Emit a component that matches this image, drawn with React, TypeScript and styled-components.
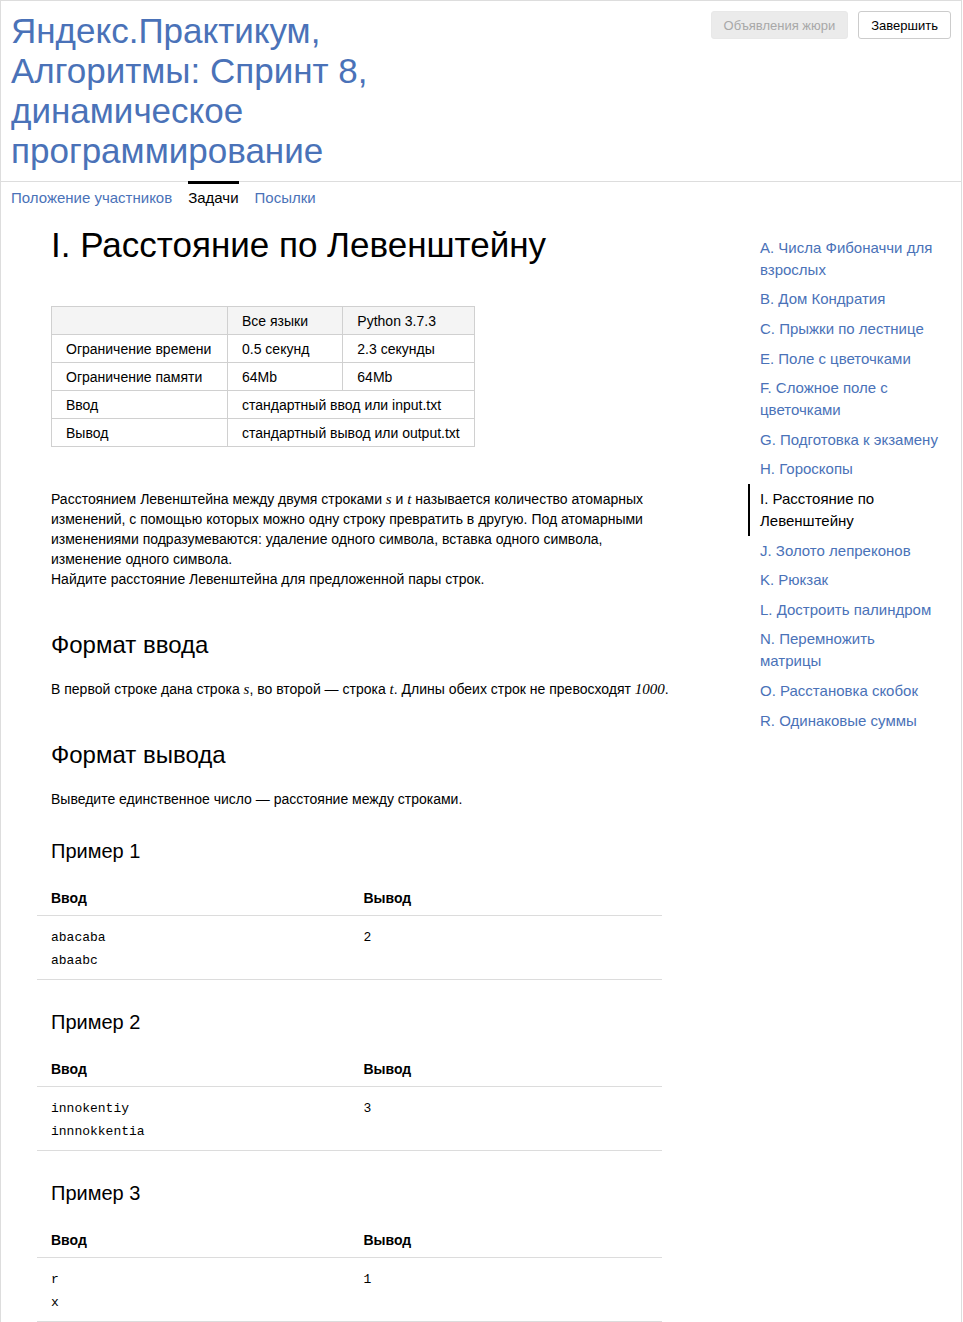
import styled, { createGlobalStyle } from 'styled-components';

const GlobalStyle = createGlobalStyle`
	body {
		margin: 0;
		background: #fff;
		font-family: "Liberation Sans", Arial, sans-serif;
		color: #000;
	}
`;

const Page = styled.div`
	width: 962px;
	min-height: 1322px;
	box-sizing: border-box;
	border: 1px solid #dddddd;
	border-bottom: none;
`;

const Header = styled.header`
	display: flex;
	justify-content: space-between;
	align-items: flex-start;
	padding: 10px;
	border-bottom: 1px solid #dddddd;
`;

const Title = styled.h1`
	margin: 0;
	max-width: 420px;
	font-size: 35px;
	line-height: 40px;
	font-weight: normal;
	color: #4a72b8;
`;

const Actions = styled.div`
	display: flex;
	gap: 10px;
`;

const Button = styled.button<{ $disabled?: boolean }>`
	height: 28px;
	padding: 0 12px;
	box-sizing: border-box;
	border-radius: 3px;
	font-family: "Liberation Sans", Arial, sans-serif;
	font-size: 13px;
	border: 1px solid ${(p) => (p.$disabled ? '#e8e8e8' : '#cccccc')};
	background: ${(p) => (p.$disabled ? '#ebebeb' : '#ffffff')};
	color: ${(p) => (p.$disabled ? '#a8a8a8' : '#000000')};
`;

const Tabs = styled.nav`
	display: flex;
	gap: 16px;
	padding: 0 10px;
	height: 36px;
`;

const Tab = styled.a<{ $active?: boolean }>`
	display: block;
	padding-top: 4px;
	margin-top: -1px;
	border-top: 3px solid ${(p) => (p.$active ? '#000' : 'transparent')};
	font-size: 15px;
	line-height: 20px;
	color: ${(p) => (p.$active ? '#000' : '#4a72b8')};
	text-decoration: none;
`;

const Main = styled.div`
	display: grid;
	grid-template-columns: 1fr 213px;
`;

const Content = styled.main`
	padding: 7px 0 0 50px;
	width: 621px;
`;

const ProblemTitle = styled.h1`
	margin: 0;
	font-size: 35px;
	line-height: 40px;
	font-weight: normal;
`;

const LimitsTable = styled.table`
	margin-top: 41px;
	border-collapse: collapse;
	font-size: 14px;

	td {
		border: 1px solid #d0d0d0;
		height: 27px;
		padding: 0 14px;
		line-height: 20px;
		white-space: nowrap;
	}

	thead td {
		background: #f4f4f4;
	}
`;

const Text = styled.p<{ $top: number }>`
	margin: ${(p) => p.$top}px 0 0;
	font-size: 14px;
	line-height: 20px;
`;

const M = styled.i`
	font-family: "Liberation Serif", "Times New Roman", serif;
	font-size: 15px;
	line-height: 1;
`;

const SectionTitle = styled.h2`
	margin: 41px 0 0;
	font-size: 24px;
	line-height: 30px;
	font-weight: normal;
`;

const ExampleTitle = styled.h3`
	margin: 29px 0 0;
	font-size: 20px;
	line-height: 26px;
	font-weight: normal;
`;

const ExampleTable = styled.table`
	margin: 14px 0 0 -14px;
	width: 625px;
	border-collapse: collapse;
	table-layout: fixed;

	th {
		text-align: left;
		font-size: 14px;
		font-weight: bold;
		line-height: 20px;
		padding: 10px 14px 7px;
		border-bottom: 1px solid #dcdcdc;
	}

	td {
		vertical-align: top;
		padding: 10px 14px 7px;
		border-bottom: 1px solid #dcdcdc;
	}
`;

const Code = styled.pre`
	margin: 0;
	font-family: "Liberation Mono", "DejaVu Sans Mono", monospace;
	font-size: 13px;
	line-height: 23px;
`;

const Sidebar = styled.aside`
	padding-top: 15px;
	display: flex;
	flex-direction: column;
`;

const SideItem = styled.a<{ $active?: boolean }>`
	display: block;
	padding: 3.8px 22px 3.8px 10px;
	border-left: 2px solid ${(p) => (p.$active ? '#000' : 'transparent')};
	font-size: 15px;
	line-height: 22px;
	color: ${(p) => (p.$active ? '#000' : '#4a72b8')};
	text-decoration: none;
`;

const problems = [
	'A. Числа Фибоначчи для взрослых',
	'B. Дом Кондратия',
	'C. Прыжки по лестнице',
	'E. Поле с цветочками',
	'F. Сложное поле с цветочками',
	'G. Подготовка к экзамену',
	'H. Гороскопы',
	'I. Расстояние по Левенштейну',
	'J. Золото лепреконов',
	'K. Рюкзак',
	'L. Достроить палиндром',
	'N. Перемножить матрицы',
	'O. Расстановка скобок',
	'R. Одинаковые суммы',
];

const examples = [
	{ input: 'abacaba\nabaabc', output: '2' },
	{ input: 'innokentiy\ninnnokkentia', output: '3' },
	{ input: 'r\nx', output: '1' },
];

const App = () => {
	return (
		<Page>
			<GlobalStyle />
			<Header>
				<Title>Яндекс.Практикум, Алгоритмы: Спринт 8, динамическое программирование</Title>
				<Actions>
					<Button $disabled>Объявления жюри</Button>
					<Button>Завершить</Button>
				</Actions>
			</Header>
			<Tabs>
				<Tab href="#">Положение участников</Tab>
				<Tab href="#" $active>Задачи</Tab>
				<Tab href="#">Посылки</Tab>
			</Tabs>
			<Main>
				<Content>
					<ProblemTitle>I. Расстояние по Левенштейну</ProblemTitle>
					<LimitsTable>
						<thead>
							<tr>
								<td style={{ width: 147 }}></td>
								<td style={{ width: 86 }}>Все языки</td>
								<td style={{ width: 102 }}>Python 3.7.3</td>
							</tr>
						</thead>
						<tbody>
							<tr>
								<td>Ограничение времени</td>
								<td>0.5 секунд</td>
								<td>2.3 секунды</td>
							</tr>
							<tr>
								<td>Ограничение памяти</td>
								<td>64Mb</td>
								<td>64Mb</td>
							</tr>
							<tr>
								<td>Ввод</td>
								<td colSpan={2}>стандартный ввод или input.txt</td>
							</tr>
							<tr>
								<td>Вывод</td>
								<td colSpan={2}>стандартный вывод или output.txt</td>
							</tr>
						</tbody>
					</LimitsTable>
					<Text $top={42}>
						Расстоянием Левенштейна между двумя строками <M>s</M> и <M>t</M> называется количество атомарных
						изменений, с помощью которых можно одну строку превратить в другую. Под атомарными изменениями
						подразумеваются: удаление одного символа, вставка одного символа, изменение одного символа.
						<br />
						Найдите расстояние Левенштейна для предложенной пары строк.
					</Text>
					<SectionTitle>Формат ввода</SectionTitle>
					<Text $top={19}>
						В первой строке дана строка <M>s</M>, во второй — строка <M>t</M>. Длины обеих строк не превосходят <M>1000</M>.
					</Text>
					<SectionTitle>Формат вывода</SectionTitle>
					<Text $top={19}>Выведите единственное число — расстояние между строками.</Text>
					{examples.map((ex, i) => (
						<div key={i}>
							<ExampleTitle>Пример {i + 1}</ExampleTitle>
							<ExampleTable>
								<thead>
									<tr>
										<th>Ввод</th>
										<th>Вывод</th>
									</tr>
								</thead>
								<tbody>
									<tr>
										<td><Code>{ex.input}</Code></td>
										<td><Code>{ex.output}</Code></td>
									</tr>
								</tbody>
							</ExampleTable>
						</div>
					))}
				</Content>
				<Sidebar>
					{problems.map((name) => (
						<SideItem key={name} href="#" $active={name.startsWith('I.')}>
							{name}
						</SideItem>
					))}
				</Sidebar>
			</Main>
		</Page>
	);
};

export default App;
